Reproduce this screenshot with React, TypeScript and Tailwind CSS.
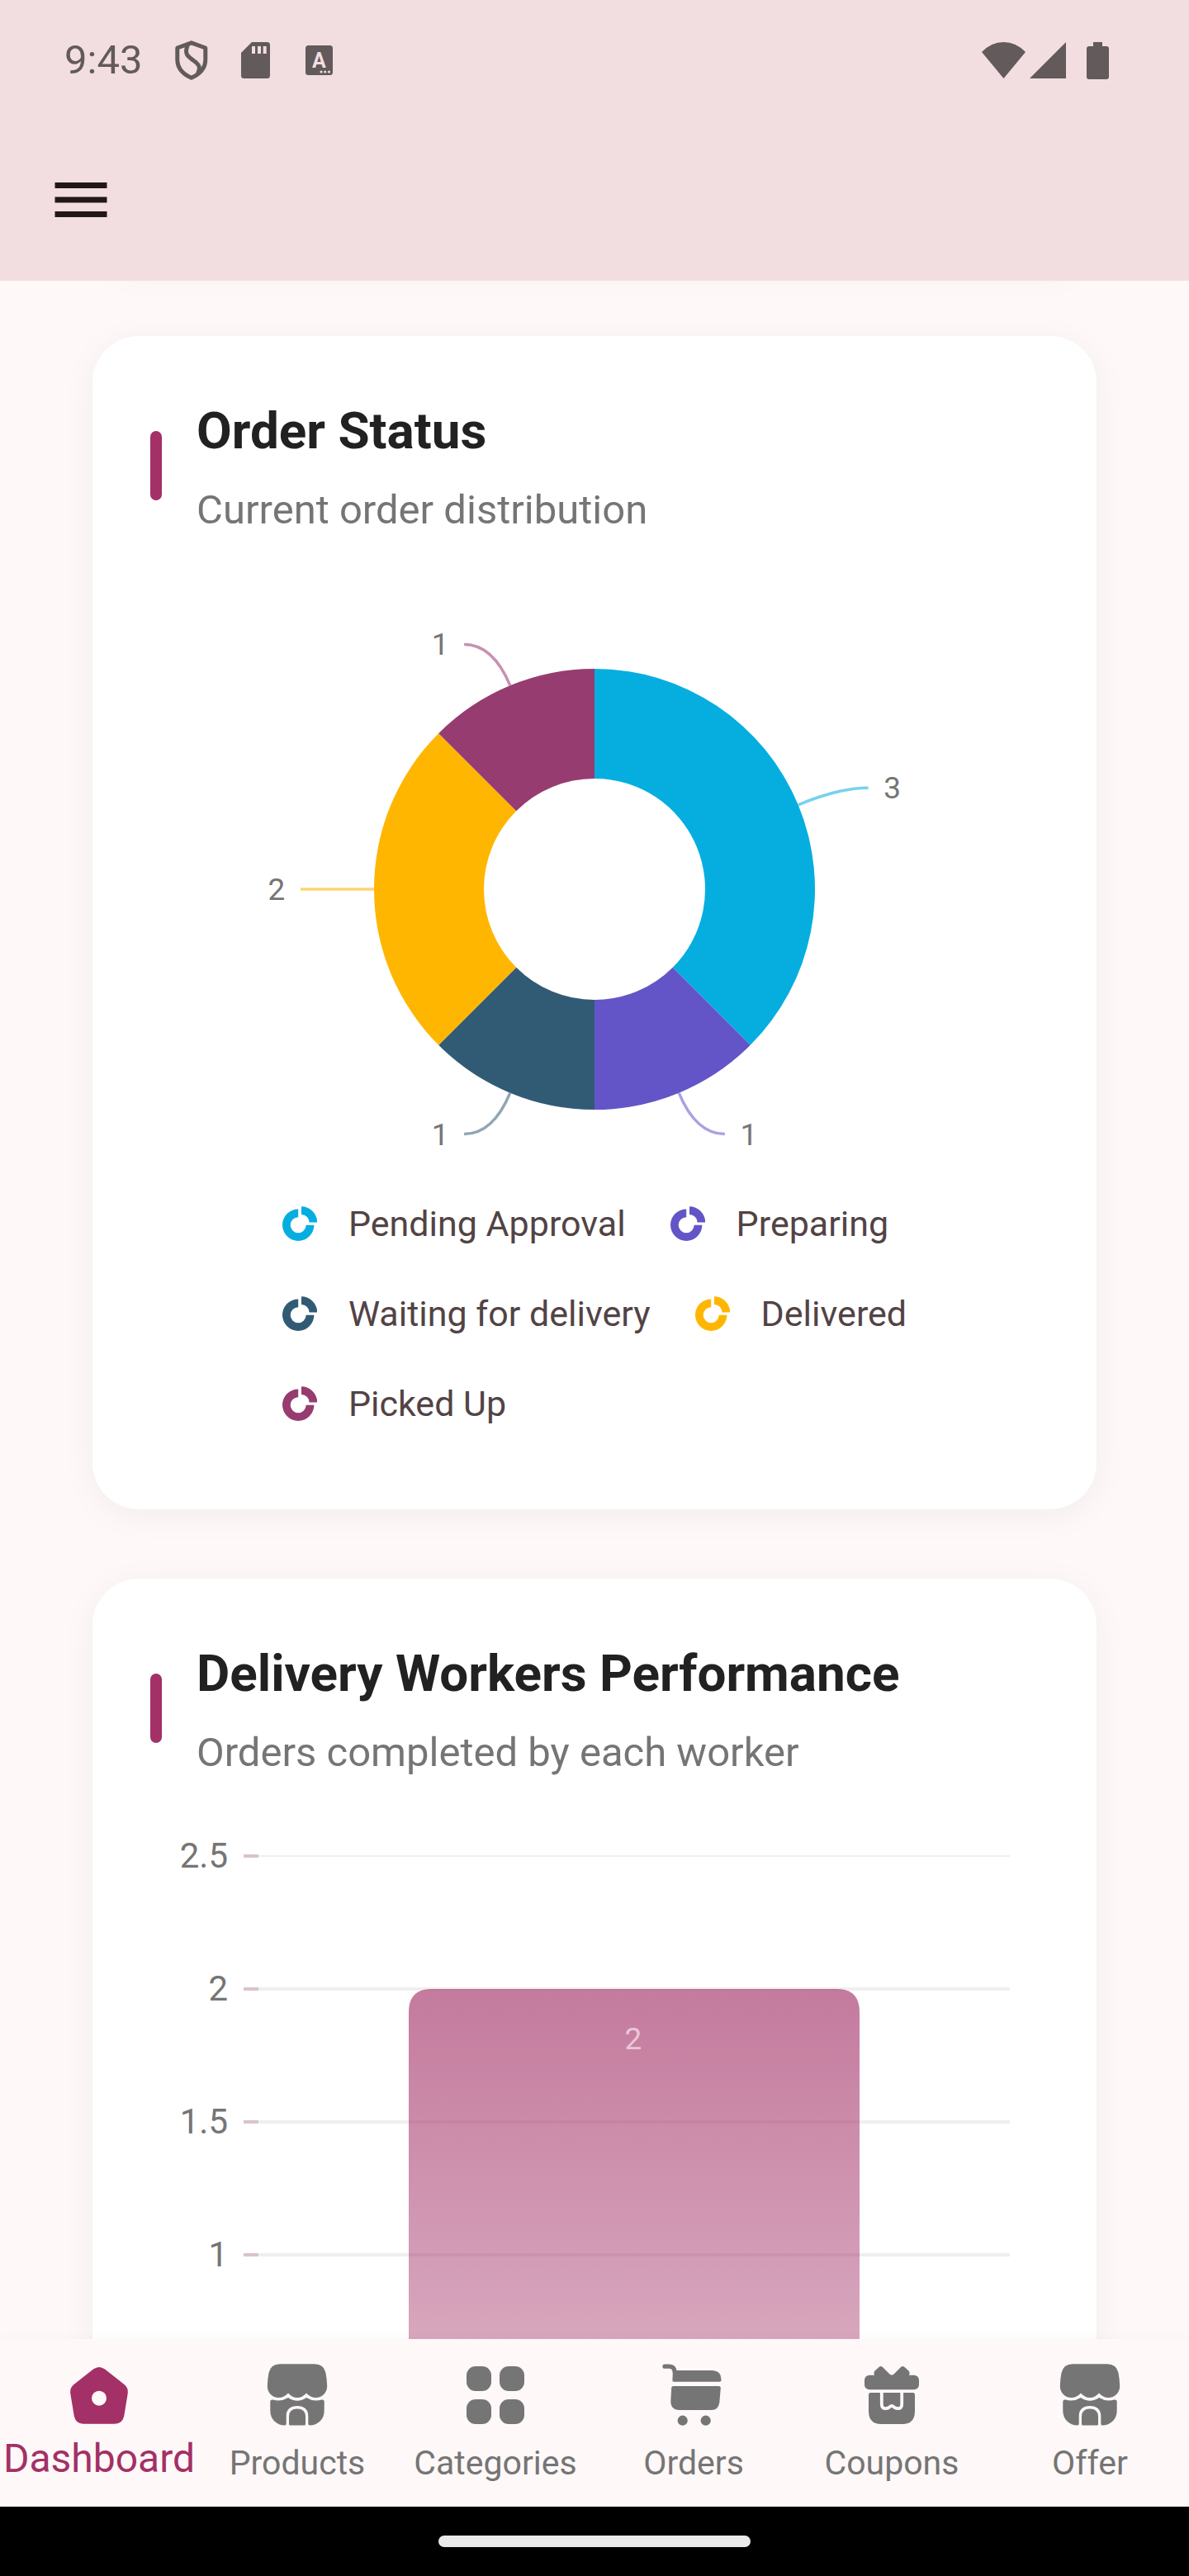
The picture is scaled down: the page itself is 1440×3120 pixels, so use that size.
import React from "react";

type Slice = { label: string; value: number; color: string; line: string };

const slices: Slice[] = [
  { label: "Pending Approval", value: 3, color: "#06aee0", line: "#76d2ee" },
  { label: "Preparing", value: 1, color: "#6355c7", line: "#aba1e0" },
  { label: "Waiting for delivery", value: 1, color: "#315b74", line: "#8ea6b5" },
  { label: "Delivered", value: 2, color: "#ffb600", line: "#ffd470" },
  { label: "Picked Up", value: 1, color: "#963c70", line: "#c692b0" },
];

const legendRows = [slices.slice(0, 2), slices.slice(2, 4), slices.slice(4)];

function polar(cx: number, cy: number, r: number, angle: number) {
  return [cx + r * Math.sin(angle), cy - r * Math.cos(angle)];
}

function ringPath(cx: number, cy: number, inner: number, outer: number, from: number, to: number) {
  const large = to - from > Math.PI ? 1 : 0;
  const [ax, ay] = polar(cx, cy, outer, from);
  const [bx, by] = polar(cx, cy, outer, to);
  const [dx, dy] = polar(cx, cy, inner, to);
  const [ex, ey] = polar(cx, cy, inner, from);
  return `M${ax} ${ay}A${outer} ${outer} 0 ${large} 1 ${bx} ${by}L${dx} ${dy}A${inner} ${inner} 0 ${large} 0 ${ex} ${ey}Z`;
}

function DonutChart() {
  const total = slices.reduce((sum, s) => sum + s.value, 0);
  const cx = 538;
  const cy = 376;
  let start = 0;
  return (
    <svg viewBox="0 0 1076 726" className="block w-full" role="img" aria-label="Order status distribution">
      {slices.map((s) => {
        const end = start + (s.value / total) * Math.PI * 2;
        const mid = (start + end) / 2;
        const path = ringPath(cx, cy, 134, 267, start, end);
        const [px, py] = polar(cx, cy, 267, mid);
        const [qx, qy] = polar(cx, cy, 321, mid);
        const dir = px > cx ? 1 : -1;
        start = end;
        return (
          <g key={s.label}>
            <path d={path} fill={s.color} />
            <path d={`M${px} ${py}Q${qx} ${qy} ${qx + dir * 35} ${qy}`} fill="none" stroke={s.line} strokeWidth="3.5" />
            <text x={qx + dir * 64} y={qy + 13} textAnchor="middle" fontSize="37" fill="#757575">
              {s.value}
            </text>
          </g>
        );
      })}
    </svg>
  );
}

function LegendIcon({ color }: { color: string }) {
  return (
    <svg viewBox="0 0 42 42" className="size-[42px] shrink-0" fill={color} aria-hidden="true">
      <path d={ringPath(19.2, 22.7, 9.5, 19.2, Math.PI / 2, Math.PI * 2)} />
      <path d={ringPath(23, 19.5, 9.5, 19.2, 0, Math.PI / 2)} />
    </svg>
  );
}

function BarChart() {
  const ticks = ["2.5", "2", "1.5", "1"];
  return (
    <svg viewBox="0 0 1076 920" className="block w-full" role="img" aria-label="Orders completed by each worker">
      <defs>
        <linearGradient id="bar-fill" x1="0" y1="0" x2="0" y2="1">
          <stop offset="0" stopColor="#a33066" stopOpacity="0.64" />
          <stop offset="1" stopColor="#a33066" stopOpacity="0.32" />
        </linearGradient>
      </defs>
      {ticks.map((t, i) => {
        const y = 42 + i * 161;
        return (
          <g key={t}>
            <line x1="131" x2="1041" y1={y} y2={y} stroke="#efefef" strokeWidth={i === 0 ? 2 : 4} />
            <line x1="113" x2="131" y1={y} y2={y} stroke="#dac4c8" strokeWidth="4" />
            <text x="94" y={y + 14} textAnchor="end" fontSize="42" fill="#757575">
              {t}
            </text>
          </g>
        );
      })}
      <path d="M313 847V231Q313 203 341 203H831Q859 203 859 231V847Z" fill="url(#bar-fill)" />
      <text x="585" y="276" textAnchor="middle" fontSize="37" fill="#e9c6d8">
        2
      </text>
    </svg>
  );
}

function Card({ title, subtitle, children }: { title: string; subtitle: string; children: React.ReactNode }) {
  return (
    <section className="rounded-[56px] bg-white p-[70px] shadow-[0_7px_42px_rgba(0,0,0,0.05)]">
      <div className="mb-[50px] flex items-center gap-[42px]">
        <span className="h-[84px] w-[14px] shrink-0 rounded-full bg-[#a33066]" />
        <div className="flex flex-col gap-[18px]">
          <h2 className="text-[62px] leading-[90px] font-bold text-[#212121]">{title}</h2>
          <p className="text-[49px] leading-[66px] text-[#757575]">{subtitle}</p>
        </div>
      </div>
      {children}
    </section>
  );
}

function DashboardIcon() {
  return (
    <path
      fillRule="evenodd"
      d="M35 9.5Q42 4.5 49 9.5L72.5 28Q77.5 32 76.8 38.5L72.3 66Q70.5 75.7 61 75.7H23Q13.5 75.7 11.7 66L7.2 38.5Q6.5 32 11.5 28ZM51 44.7A9 9 0 1 0 33 44.7A9 9 0 1 0 51 44.7Z"
    />
  );
}

function StoreIcon() {
  return (
    <>
      <path d="M21 3.3H63Q74 3.3 76.5 14Q78 22 78.2 30C78.2 38 72 44 64.5 44C60 44 56 42 53 38.5C50 42 46.5 44 42 44C37.5 44 34 42 31 38.5C28 42 24 44 19.5 44C12 44 5.8 38 5.8 30Q6 22 7.5 14Q10 3.3 21 3.3Z" />
      <path d="M9.3 49Q9.3 46 12.5 46.5Q22 49.5 31 44Q42 51.5 53 44Q62 49.5 71.5 46.5Q74.7 46 74.7 49V60C74.7 70 67 77.5 57 77.5Q55.3 77.5 55.3 75.5V66C55.3 58 50 54 42 54C34 54 28.7 58 28.7 66V75.5Q28.7 77.5 27 77.5C17 77.5 9.3 70 9.3 60Z" />
      <path d="M32 67Q32 57.5 42 57.5Q52 57.5 52 67V76Q52 77.5 50.5 77.5H33.5Q32 77.5 32 76Z" />
    </>
  );
}

function CategoriesIcon() {
  return (
    <>
      <rect x="7" y="6" width="30" height="30" rx="11" />
      <rect x="47" y="6" width="30" height="30" rx="11" />
      <rect x="7" y="46" width="30" height="30" rx="11" />
      <rect x="47" y="46" width="30" height="30" rx="11" />
    </>
  );
}

function OrdersIcon() {
  return (
    <>
      <path d="M7 6.2H12.5Q19 6.2 19.3 14" fill="none" stroke="currentColor" strokeWidth="5.2" strokeLinecap="round" />
      <path d="M17 11H65Q75.5 11.5 75.5 22V23Q75.5 24.7 73.5 24.7H18Q16.3 24.7 16.4 23Z" />
      <path d="M17.5 30H72.5Q75 30 74.8 32.5L73.3 50Q72 59 63.5 59H24Q14.5 58.5 14.3 49L15.2 32Q15.4 30 17.5 30Z" />
      <circle cx="28.7" cy="71.7" r="6.1" />
      <circle cx="56.7" cy="71.7" r="6.1" />
    </>
  );
}

function CouponsIcon() {
  return (
    <>
      <path d="M21.5 18L20.5 15Q20 13 21.5 11.5L26.5 7Q28.7 5 31 7L39.5 15.5Q42 18 44.5 15.5L53 7Q55.3 5 57.5 7L62.5 11.5Q64 13 63.5 15L62.5 18Z" />
      <rect x="9" y="16.7" width="66" height="17.5" rx="6" />
      <path d="M16.5 38H67.5Q70 38 70 40.5V61Q69.5 76 55 76H29Q14.5 76 14 61V40.5Q14 38 16.5 38Z" />
      <path
        d="M29.8 36V52Q29.8 57.2 34.5 57.2Q36.5 57.2 38.5 56L40.5 54.5Q42 53.5 43.5 54.5L45.5 56Q47.5 57.2 49.5 57.2Q54.2 57.2 54.2 52V36"
        fill="none"
        stroke="#fef8f8"
        strokeWidth="3.8"
      />
    </>
  );
}

const tabs = [
  { label: "Dashboard", Icon: DashboardIcon },
  { label: "Products", Icon: StoreIcon },
  { label: "Categories", Icon: CategoriesIcon },
  { label: "Orders", Icon: OrdersIcon },
  { label: "Coupons", Icon: CouponsIcon },
  { label: "Offer", Icon: StoreIcon },
];

function StatusBar() {
  return (
    <div className="flex h-36 items-center justify-between pt-0.5 pr-[97px] pl-[78px] text-[#625a5b]">
      <div className="flex items-center gap-10">
        <span className="text-[49px] leading-[60px]">9:43</span>
        <svg viewBox="0 0 40 48" className="h-12 w-10" fill="none" stroke="currentColor" strokeWidth="5" strokeLinejoin="round" aria-hidden="true">
          <path d="M19.8 2.8L36.8 9V23C36.8 34 29.5 41 19.8 45.3C10 41 2.8 34 2.8 23V9Z" />
          <path d="M15.5 5C10.5 17 16 19.5 22 24C29 29 31.5 32 27.5 40" />
        </svg>
        <svg viewBox="0 0 38 44" className="h-11 w-[38px]" aria-hidden="true">
          <path d="M13 0H31.5Q35 0 35 3.5V40.5Q35 44 31.5 44H3.5Q0 44 0 40.5V13Z" fill="currentColor" />
          <path d="M13 5h4v9h-4zM20 5h4v9h-4zM26.7 5h4v9h-4z" fill="#f2dee0" />
        </svg>
        <svg viewBox="0 0 33 36" className="h-9 w-[33px]" aria-hidden="true">
          <rect width="33" height="36" rx="3.5" fill="currentColor" />
          <text x="16.5" y="27" textAnchor="middle" fontSize="25" fontWeight="700" fill="#f2dee0">
            A
          </text>
          <g fill="#f2dee0">
            <circle cx="19" cy="32" r="1.6" />
            <circle cx="23.7" cy="32" r="1.6" />
            <circle cx="28.5" cy="32" r="1.6" />
          </g>
        </svg>
      </div>
      <div className="flex items-center" aria-hidden="true">
        <svg viewBox="0 0 53 44" className="h-11 w-[53px]" fill="currentColor">
          <path d="M26.5 44L0 12Q11.5 0 26.5 0Q41.5 0 53 12Z" />
        </svg>
        <svg viewBox="0 0 44 44" className="ml-[5px] size-11" fill="currentColor">
          <path d="M44 0V44H0Z" />
        </svg>
        <svg viewBox="0 0 27 45" className="ml-[25px] h-[45px] w-[27px]" fill="currentColor">
          <path d="M8 0H19V5H24Q27 5 27 8V42Q27 45 24 45H3Q0 45 0 42V8Q0 5 3 5H8Z" />
        </svg>
      </div>
    </div>
  );
}

export default function App() {
  return (
    <div className="flex h-screen flex-col overflow-hidden bg-[#fef8f8] font-['Roboto',sans-serif]">
      <header className="shrink-0 bg-[#f2dee0]">
        <StatusBar />
        <div className="flex h-[196px] items-center pl-14">
          <button type="button" aria-label="Open menu" className="size-[84px]">
            <svg viewBox="0 0 24 24" className="size-full" fill="#231819" aria-hidden="true">
              <path d="M3 18h18v-2H3v2zm0-5h18v-2H3v2zm0-7v2h18V6H3z" />
            </svg>
          </button>
        </div>
      </header>

      <main className="flex min-h-0 flex-1 flex-col gap-[84px] overflow-y-auto px-28 [scrollbar-width:none]">
        {/* Lower edge of the card that has scrolled under the app bar */}
        <div aria-hidden="true" className="-mt-[137px] h-[120px] shrink-0 rounded-[56px] bg-white shadow-[0_7px_42px_rgba(0,0,0,0.05)]" />
        <Card title="Order Status" subtitle="Current order distribution">
          <DonutChart />
          <ul className="mx-auto w-fit pb-1">
            {legendRows.map((row, i) => (
              <li key={i}>
                <ul className="flex h-[109px] items-center gap-[54px]">
                  {row.map((s) => (
                    <li key={s.label} className="flex items-center gap-[38px] text-[43px] leading-[60px] whitespace-nowrap text-[#524345]">
                      <LegendIcon color={s.color} />
                      {s.label}
                    </li>
                  ))}
                </ul>
              </li>
            ))}
          </ul>
        </Card>
        <Card title="Delivery Workers Performance" subtitle="Orders completed by each worker">
          <BarChart />
        </Card>
      </main>

      <nav className="relative grid shrink-0 grid-cols-6 bg-[#fef8f8] pt-[27px] pb-[14px] shadow-[0_0_14px_rgba(0,0,0,0.03)]">
        {tabs.map(({ label, Icon }, i) => (
          <button
            key={label}
            type="button"
            aria-current={i === 0 ? "page" : undefined}
            className={i === 0 ? "flex flex-col items-center text-[#a33066]" : "flex flex-col items-center text-[#757575]"}
          >
            <svg viewBox="0 0 84 84" className="size-[84px]" fill="currentColor" aria-hidden="true">
              <Icon />
            </svg>
            <span className={i === 0 ? "text-[48px] leading-[68px]" : "text-[41px] leading-[78px]"}>{label}</span>
          </button>
        ))}
      </nav>

      <div className="flex h-[84px] shrink-0 items-center justify-center bg-black">
        <span className="h-[14px] w-[378px] rounded-full bg-[#eaeaea]" />
      </div>
    </div>
  );
}
